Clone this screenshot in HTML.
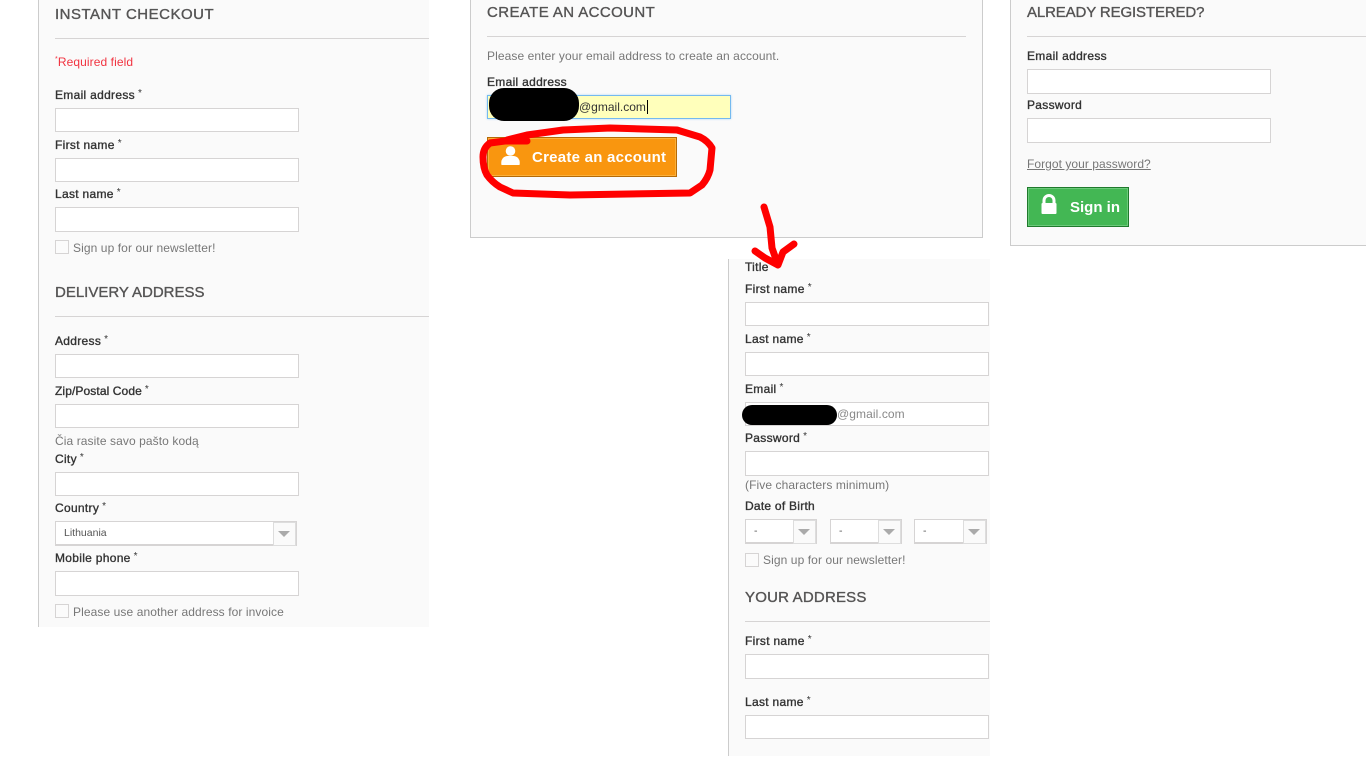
<!DOCTYPE html>
<html><head><meta charset="utf-8"><style>
html,body{margin:0;padding:0;background:#fff;width:1366px;height:768px;overflow:hidden}
body{position:relative;font-family:"Liberation Sans",sans-serif}
div,span.a{position:absolute;box-sizing:border-box;white-space:nowrap}
.p{background:#fafafa;border:1px solid #ccc;border-top:0}
.h{font-size:15px;color:#555454;line-height:20px;-webkit-text-stroke:.35px #555454}
.r{height:1px;background:#d6d4d4}
.l{font-size:12px;line-height:14px;color:#333;letter-spacing:.3px;-webkit-text-stroke:.35px #333}
.l sup{font-size:10px;line-height:0;margin-left:3px;vertical-align:3px;-webkit-text-stroke:0}
.i{background:#fff;border:1px solid #d6d4d4;width:244px;height:24px}
.t{font-size:12px;line-height:14px;color:#777;letter-spacing:.09px}
.c{width:14px;height:14px;border:1px solid #d6d4d4;background:#fbfbfb}
.s{height:25px;background:#fff;border:1px solid #d6d4d4;border-bottom-width:2px;font-size:10.500px;line-height:23px;color:#555;padding-left:8px}
.s b{position:absolute;right:0;top:0;width:21px;height:22px;background:#fafafa;border:1px solid #ddd}
.s b:after{content:"";position:absolute;left:4px;top:8px;border:6px solid transparent;border-top:6px solid #aaa;border-bottom:0}
.btn{color:#fff;font-size:15px;font-weight:bold;line-height:38px;letter-spacing:.25px}
</style></head><body>

<div class="p" style="left:38px;top:0;width:391px;height:627px;border-right:0;border-bottom:0"></div>
<div class="p" style="left:470px;top:0;width:513px;height:238px"></div>
<div class="p" style="left:1010px;top:0;width:358px;height:246px"></div>
<div class="p" style="left:728px;top:259px;width:262px;height:497px;border-right:0;border-bottom:0"></div>

<div class="h" style="left:55px;top:5px;letter-spacing:.5px">INSTANT CHECKOUT</div>
<div class="r" style="left:55px;top:38px;width:374px"></div>
<div class="t" style="left:55px;top:55px;color:#f13340"><sup style="font-size:7px;line-height:0">*</sup>Required field</div>
<div class="l" style="left:55px;top:88px">Email address<sup>*</sup></div>
<div class="i" style="left:55px;top:108px"></div>
<div class="l" style="left:55px;top:138px">First name<sup>*</sup></div>
<div class="i" style="left:55px;top:158px"></div>
<div class="l" style="left:55px;top:187px">Last name<sup>*</sup></div>
<div class="i" style="left:55px;top:207px;height:25px"></div>
<div class="c" style="left:55px;top:240px"></div>
<div class="t" style="left:73px;top:241px">Sign up for our newsletter!</div>
<div class="h" style="left:55px;top:283px">DELIVERY ADDRESS</div>
<div class="r" style="left:55px;top:316px;width:374px"></div>
<div class="l" style="left:55px;top:334px">Address<sup>*</sup></div>
<div class="i" style="left:55px;top:354px"></div>
<div class="l" style="left:55px;top:384px;letter-spacing:.1px">Zip/Postal Code<sup>*</sup></div>
<div class="i" style="left:55px;top:404px"></div>
<div class="t" style="left:55px;top:434px">Čia rasite savo pašto kodą</div>
<div class="l" style="left:55px;top:452px">City<sup>*</sup></div>
<div class="i" style="left:55px;top:472px"></div>
<div class="l" style="left:55px;top:501px">Country<sup>*</sup></div>
<div class="s" style="left:55px;top:521px;width:242px">Lithuania<b></b></div>
<div class="l" style="left:55px;top:551px">Mobile phone<sup>*</sup></div>
<div class="i" style="left:55px;top:571px;height:25px"></div>
<div class="c" style="left:55px;top:604px"></div>
<div class="t" style="left:73px;top:605px">Please use another address for invoice</div>

<div class="h" style="left:487px;top:3px;letter-spacing:.4px">CREATE AN ACCOUNT</div>
<div class="r" style="left:487px;top:36px;width:479px"></div>
<div class="t" style="left:487px;top:49px">Please enter your email address to create an account.</div>
<div class="l" style="left:487px;top:75px">Email address</div>
<div class="i" style="left:487px;top:95px;background:#ffffbb;border-color:#74b9ef;box-shadow:0 0 2px #a9d4f5"></div>
<div style="left:579px;top:100px;font-size:12px;line-height:14px;color:#333">@gmail.com</div>
<div style="left:647px;top:100px;width:1px;height:14px;background:#000"></div>
<div style="left:489px;top:88px;width:90px;height:33px;background:#000;border-radius:15px"></div>
<div class="btn" style="left:487px;top:137px;width:190px;height:40px;background:#f9960f;border:1px solid #b56a06;box-shadow:inset 0 0 0 1px #fbb03b"></div>
<div class="btn" style="left:532px;top:139px">Create an account</div>
<svg style="position:absolute;left:500px;top:145px" width="20" height="21" viewBox="0 0 20 21"><circle cx="10.500" cy="6" r="4.800" fill="#fff"/><path d="M1.500 20 Q1 18 1.500 15.500 Q3 11.500 7 11 L14 11 Q18 11.500 19.500 15.500 Q20 18 19.500 20 Z" fill="#fff"/></svg>

<div class="h" style="left:1027px;top:3px;letter-spacing:-.13px">ALREADY REGISTERED?</div>
<div class="r" style="left:1027px;top:36px;width:339px"></div>
<div class="l" style="left:1027px;top:49px">Email address</div>
<div class="i" style="left:1027px;top:69px;height:25px"></div>
<div class="l" style="left:1027px;top:98px">Password</div>
<div class="i" style="left:1027px;top:118px;height:25px"></div>
<div class="t" style="left:1027px;top:157px;text-decoration:underline;color:#777;letter-spacing:.05px">Forgot your password?</div>
<div class="btn" style="left:1027px;top:187px;width:102px;height:40px;background:#43b754;border:1px solid #1f7a2c;box-shadow:inset 0 0 0 1px #6bc97a"></div>
<div class="btn" style="left:1070px;top:189px;letter-spacing:0">Sign in</div>
<svg style="position:absolute;left:1040px;top:194px" width="18" height="21" viewBox="0 0 18 21"><path d="M4 10 V6.500 A5 5 0 0 1 14 6.500 V10" fill="none" stroke="#fff" stroke-width="3"/><rect x="1.500" y="9" width="15" height="11" rx="1" fill="#fff"/></svg>

<div class="l" style="left:745px;top:260px">Title</div>
<div class="l" style="left:745px;top:282px">First name<sup>*</sup></div>
<div class="i" style="left:745px;top:302px"></div>
<div class="l" style="left:745px;top:332px">Last name<sup>*</sup></div>
<div class="i" style="left:745px;top:352px"></div>
<div class="l" style="left:745px;top:382px">Email<sup>*</sup></div>
<div class="i" style="left:745px;top:402px"></div>
<div class="t" style="left:837px;top:407px;color:#888">@gmail.com</div>
<div style="left:742px;top:405px;width:95px;height:20px;background:#000;border-radius:10px"></div>
<div class="l" style="left:745px;top:431px">Password<sup>*</sup></div>
<div class="i" style="left:745px;top:451px;height:25px"></div>
<div class="t" style="left:745px;top:478px">(Five characters minimum)</div>
<div class="l" style="left:745px;top:499px;letter-spacing:.25px">Date of Birth</div>
<div class="s" style="left:745px;top:519px;width:72px">-<b></b></div>
<div class="s" style="left:830px;top:519px;width:72px">-<b></b></div>
<div class="s" style="left:914px;top:519px;width:73px">-<b></b></div>
<div class="c" style="left:745px;top:553px"></div>
<div class="t" style="left:763px;top:553px">Sign up for our newsletter!</div>
<div class="h" style="left:745px;top:588px;letter-spacing:.2px">YOUR ADDRESS</div>
<div class="r" style="left:745px;top:621px;width:245px"></div>
<div class="l" style="left:745px;top:634px">First name<sup>*</sup></div>
<div class="i" style="left:745px;top:654px;height:25px"></div>
<div class="l" style="left:745px;top:695px">Last name<sup>*</sup></div>
<div class="i" style="left:745px;top:715px"></div>

<svg style="position:absolute;left:0;top:0" width="1366" height="768" viewBox="0 0 1366 768" fill="none" stroke="#f00" stroke-linecap="round" stroke-linejoin="round">
<path stroke-width="7" d="M527 141 L505 141 L490 143 Q483 148 483 157 Q483 168 487 175 Q492 182 500 187 L513 193 L570 195 L690 193 L702 185 Q708 178 710 170 L712 148 Q708 141 700 137 L677 130 L610 128 L563 130 L527 135 L507 140"/>
<path stroke-width="7" d="M764 207 L770 227 L772 248 L778 265 L783 252 L794 244 M778 265 L765 258 L755 251"/>
</svg>
</body></html>
